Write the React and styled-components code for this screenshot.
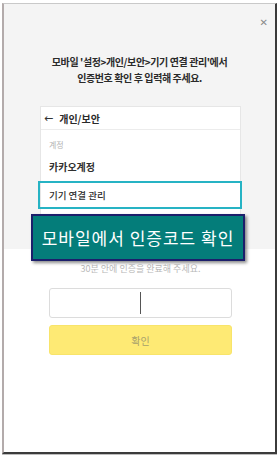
import React from 'react';
import styled, { createGlobalStyle } from 'styled-components';

const GlobalStyle = createGlobalStyle`
  html, body {
    margin: 0;
    padding: 0;
    background: #fff;
  }
  body {
    font-family: "Noto Sans CJK KR", "Noto Sans", sans-serif;
  }
`;

const Page = styled.div`
  width: 280px;
  height: 456px;
  box-sizing: border-box;
  padding: 3px 3px 2px 2px;
  background: #fff;
`;

const Frame = styled.div`
  position: relative;
  height: 100%;
  box-sizing: border-box;
  display: flex;
  flex-direction: column;
  border-top: 1px solid #c9c9c9;
  border-left: 2px solid #b3abab;
  border-right: 2px solid #3b3b3b;
  border-bottom: 2px solid #3b3b3b;
  box-shadow: 0 1px 0 #bdbdbd;
  background: #fff;
`;

const TopArea = styled.div`
  position: relative;
  height: 245px;
  background: #f4f4f4;
  display: flex;
  flex-direction: column;
  align-items: center;
  padding-top: 50px;
  box-sizing: border-box;
`;

const Close = styled.div`
  position: absolute;
  top: 13px;
  right: 7px;
  color: #8a8a8a;
  font-family: "DejaVu Sans", sans-serif;
  font-size: 10px;
  line-height: 12px;
`;

const Title = styled.p`
  margin: 0;
  text-align: center;
  font-size: 10px;
  font-weight: 700;
  line-height: 16px;
  letter-spacing: -0.4px;
  color: #2a2a2a;
`;

const Card = styled.div`
  margin-top: 20px;
  width: 201px;
  background: #fff;
  border: 1px solid #e6e6e6;
  border-bottom: none;
  box-sizing: border-box;
  margin-left: 2px;
  flex: 1;
`;

const CardHeader = styled.div`
  height: 22px;
  display: flex;
  align-items: center;
  gap: 6px;
  padding-left: 3px;
  border-bottom: 1px solid #ececec;
  font-size: 10px;
  font-weight: 700;
  color: #2a2a2a;
`;

const Arrow = styled.span`
  font-family: "DejaVu Sans", sans-serif;
  font-size: 11px;
  font-weight: 400;
  color: #333;
`;

const Section = styled.div`
  padding: 9px 0 0 8px;
  font-size: 8px;
  color: #b3b3b3;
  line-height: 12px;
`;

const Item = styled.div`
  height: ${p => p.$h || 28}px;
  display: flex;
  align-items: center;
  padding-left: 8px;
  font-size: 10px;
  font-weight: ${p => (p.$bold ? 700 : 500)};
  color: #2f2f2f;
`;

const Highlight = styled(Item)`
  margin: 0 -2px 0 -3px;
  padding-left: 9px;
  height: 24px;
  border: 2px solid #26b3c4;
  font-size: 9.5px;
`;

const Callout = styled.div`
  position: absolute;
  left: 27px;
  top: 210px;
  width: 214px;
  height: 47px;
  box-sizing: border-box;
  background: #047d7a;
  border: 2px solid #1c1f6b;
  box-shadow: 2px 2px 3px rgba(0, 0, 0, 0.45);
  display: flex;
  align-items: center;
  justify-content: center;
  color: #fff;
  font-size: 17px;
  letter-spacing: 1px;
  z-index: 2;
`;

const Bottom = styled.div`
  display: flex;
  flex-direction: column;
  align-items: center;
  padding-top: 14px;
`;

const Hint = styled.p`
  margin: 0;
  font-size: 9px;
  line-height: 12px;
  color: #b8b8b8;
  margin-left: 2px;
`;

const CodeInput = styled.div`
  margin-top: 13px;
  width: 183px;
  height: 30px;
  box-sizing: border-box;
  border: 1px solid #dcdcdc;
  border-radius: 3px;
  background: #fff;
  display: flex;
  align-items: center;
  justify-content: center;
  margin-left: 2px;
`;

const Caret = styled.span`
  width: 1px;
  height: 22px;
  background: #555;
`;

const Confirm = styled.button`
  margin-top: 7px;
  margin-left: 2px;
  width: 183px;
  height: 30px;
  border: 1px solid #f8e46a;
  border-radius: 3px;
  background: #feea74;
  color: #a7a06c;
  font-family: "Noto Sans CJK KR", sans-serif;
  font-size: 10px;
  padding: 0;
`;

export default function App() {
  return (
    <>
      <GlobalStyle />
      <Page>
        <Frame>
          <TopArea>
            <Close>✕</Close>
            <Title>
              모바일 '설정&gt;개인/보안&gt;기기 연결 관리'에서
              <br />
              인증번호 확인 후 입력해 주세요.
            </Title>
            <Card>
              <CardHeader>
                <Arrow>←</Arrow>
                개인/보안
              </CardHeader>
              <Section>계정</Section>
              <Item $bold $h={30}>카카오계정</Item>
              <Highlight>기기 연결 관리</Highlight>
            </Card>
          </TopArea>
          <Callout>모바일에서 인증코드 확인</Callout>
          <Bottom>
            <Hint>30분 안에 인증을 완료해 주세요.</Hint>
            <CodeInput>
              <Caret />
            </CodeInput>
            <Confirm type="button">확인</Confirm>
          </Bottom>
        </Frame>
      </Page>
    </>
  );
}
